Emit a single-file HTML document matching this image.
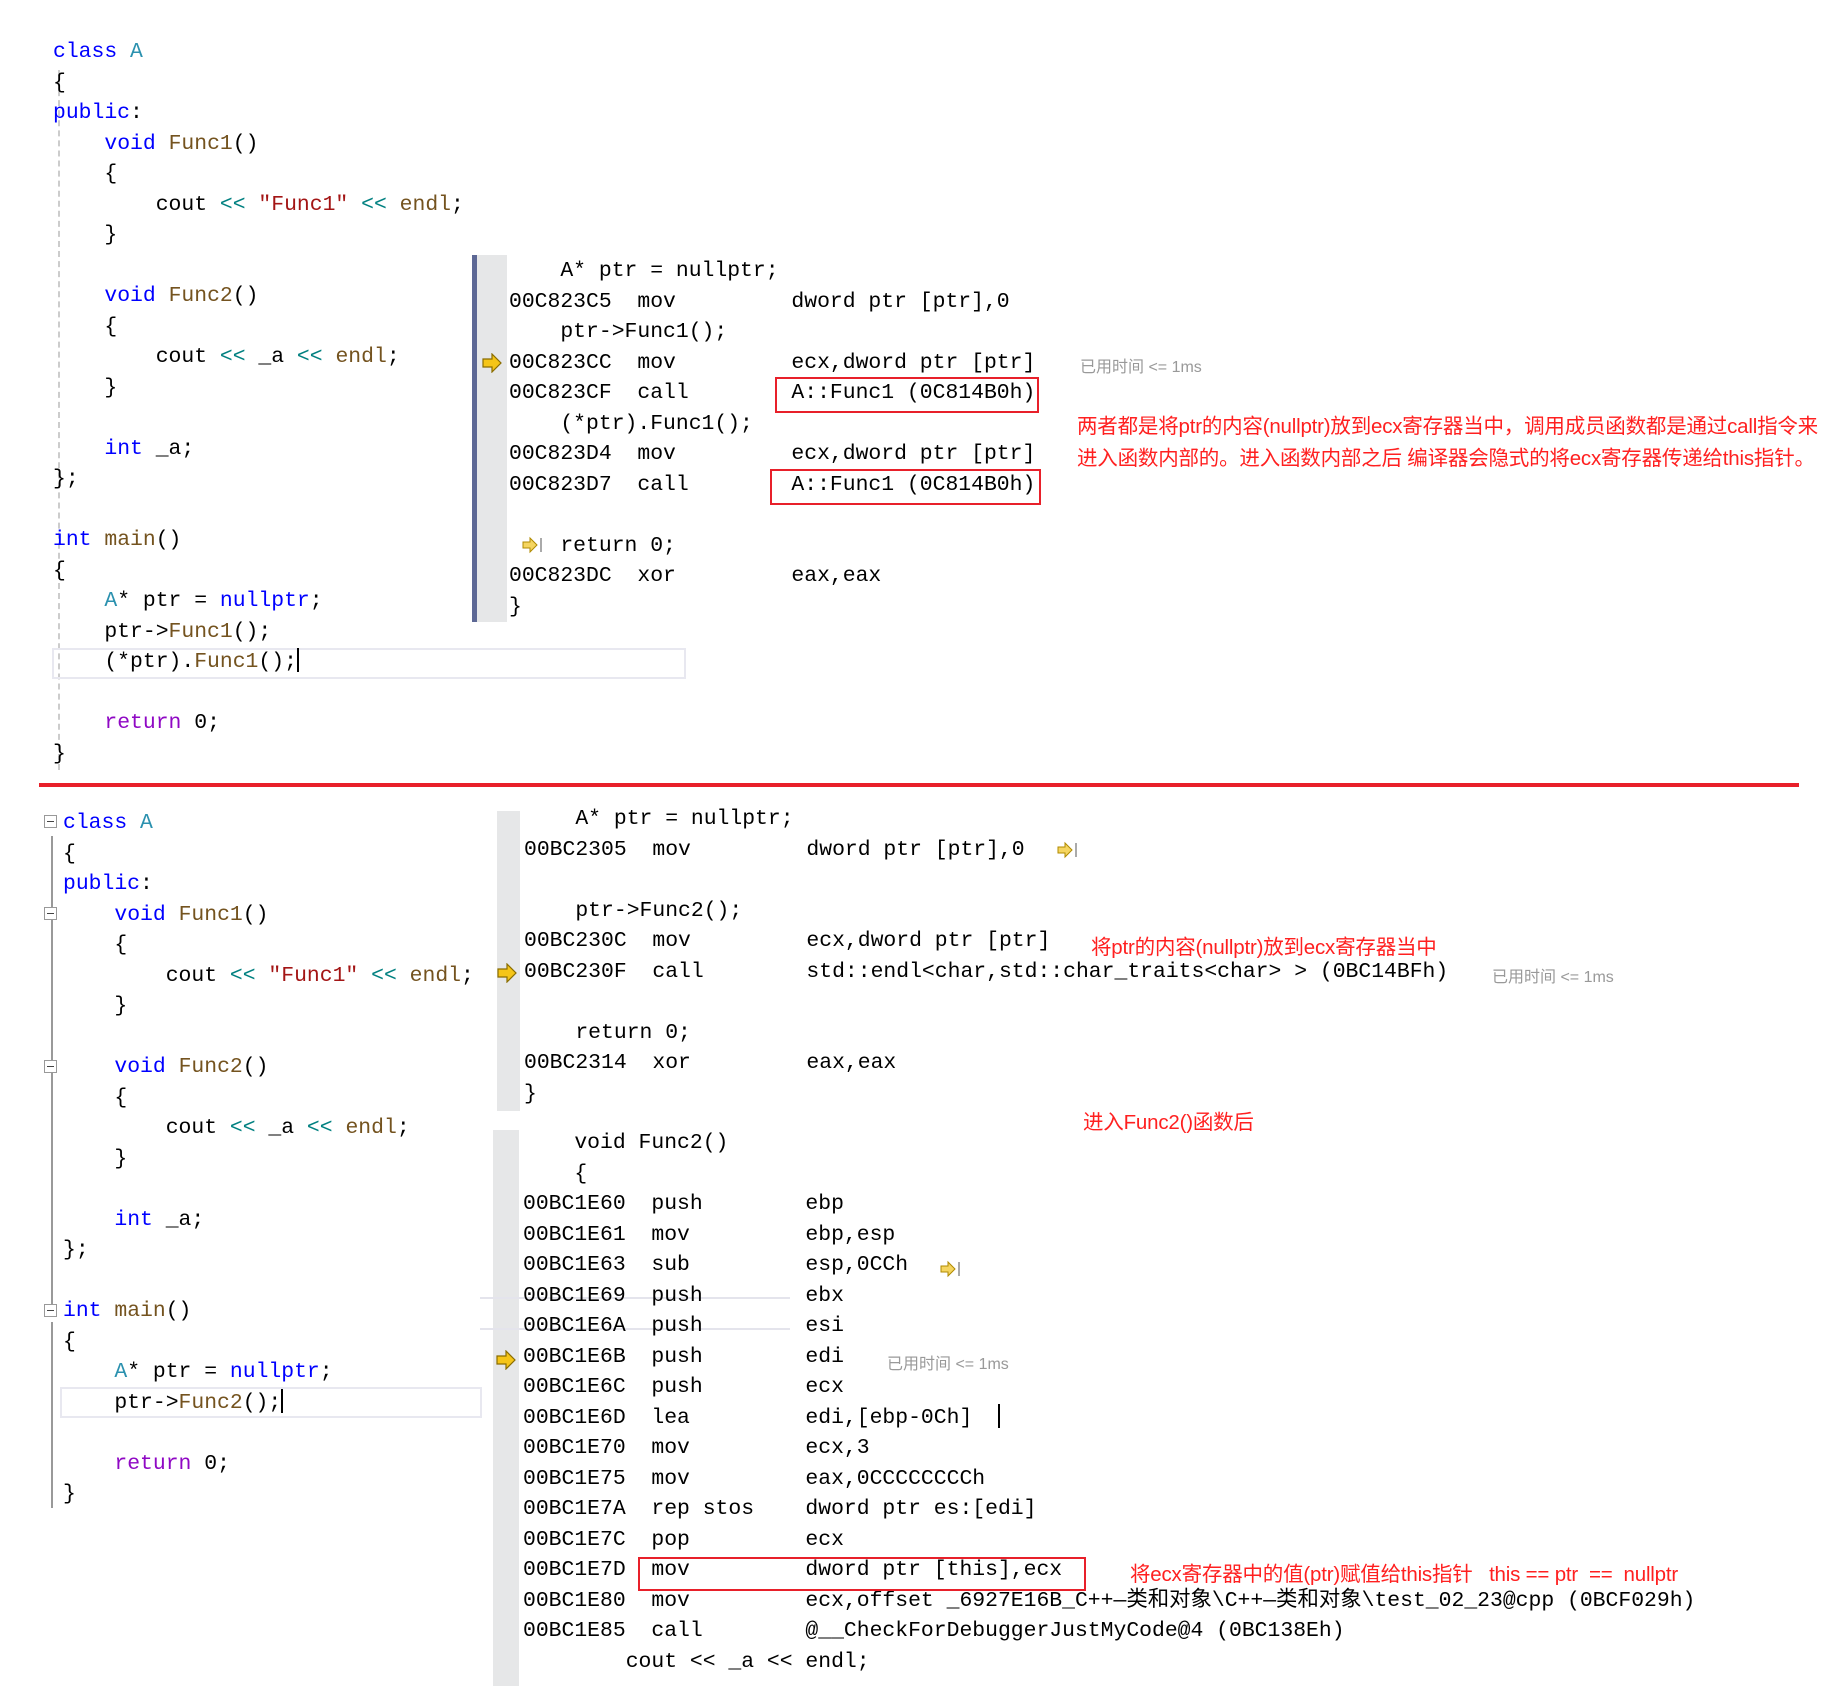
<!DOCTYPE html>
<html><head><meta charset="utf-8"><style>
body{margin:0;width:1840px;height:1686px;background:#fff;position:relative;overflow:hidden;font-family:"Liberation Mono","Noto Sans CJK SC",monospace;}
pre{margin:0;position:absolute;font-family:"Liberation Mono","Noto Sans CJK SC",monospace;font-size:21.4px;line-height:30.5px;color:#000;white-space:pre;}
.k{color:#0000ff}.t{color:#2b91af}.f{color:#74531f}.s{color:#a31515}.o{color:#008080}.r{color:#8f08c4}
.abs{position:absolute}
.bar{position:absolute;background:#e6e7e8}
.box{position:absolute;border:2.5px solid #e8202a;box-sizing:border-box}
.red{position:absolute;color:#ff2020;font-family:"Liberation Sans","Noto Sans CJK SC",sans-serif;font-size:20.5px;white-space:nowrap;letter-spacing:-0.2px}
.gray{position:absolute;color:#999;font-family:"Liberation Sans","Noto Sans CJK SC",sans-serif;font-size:16px;white-space:nowrap}
.arrow{position:absolute;width:22px;height:20px}
.cb{position:absolute;width:11px;height:11px;border:1px solid #999;background:#fff}
.cb:after{content:"";position:absolute;left:2px;right:2px;top:5px;height:1px;background:#444}
.hl{position:absolute;border:2px solid #e8e8f0;box-sizing:border-box}
.cur{display:inline-block;width:2px;height:24px;background:#000;vertical-align:-5px}
</style></head><body>
<!-- top left code -->
<div class="abs" style="left:58px;top:70px;width:0;height:700px;border-left:2px dashed #ccc"></div>
<div class="hl" style="left:52px;top:648px;width:634px;height:31px"></div>
<pre style="left:53px;top:37px"><span class="k">class</span> <span class="t">A</span>
{
<span class="k">public</span>:
    <span class="k">void</span> <span class="f">Func1</span>()
    {
        cout <span class="o">&lt;&lt;</span> <span class="s">"Func1"</span> <span class="o">&lt;&lt;</span> <span class="f">endl</span>;
    }

    <span class="k">void</span> <span class="f">Func2</span>()
    {
        cout <span class="o">&lt;&lt;</span> _a <span class="o">&lt;&lt;</span> <span class="f">endl</span>;
    }

    <span class="k">int</span> _a;
};

<span class="k">int</span> <span class="f">main</span>()
{
    <span class="t">A</span>* ptr = <span class="k">nullptr</span>;
    ptr-&gt;<span class="f">Func1</span>();
    (*ptr).<span class="f">Func1</span>();<span class="cur"></span>

    <span class="r">return</span> 0;
}</pre>
<!-- top disasm -->
<div class="bar" style="left:472px;top:255px;width:35px;height:367px"></div>
<div class="abs" style="left:472px;top:255px;width:5px;height:367px;background:#5d6895"></div>
<pre style="left:509px;top:256px">    A* ptr = nullptr;
00C823C5  mov         dword ptr [ptr],0
    ptr-&gt;Func1();
00C823CC  mov         ecx,dword ptr [ptr]
00C823CF  call        A::Func1 (0C814B0h)
    (*ptr).Func1();
00C823D4  mov         ecx,dword ptr [ptr]
00C823D7  call        A::Func1 (0C814B0h)

    return 0;
00C823DC  xor         eax,eax
}</pre>
<svg class="arrow" style="left:481px;top:353px" viewBox="0 0 22 20"><path d="M2 6h9V1l9 9-9 9v-5H2z" fill="#f5c518" stroke="#8a6d00" stroke-width="1.2"/></svg>
<svg class="abs" style="left:522px;top:536px" width="22" height="18" viewBox="0 0 22 18"><path d="M1 6h7V2l7 7-7 7v-4H1z" fill="#f5d560" stroke="#b08a00"/><rect x="18" y="2" width="2" height="14" fill="#aaa"/></svg>
<div class="box" style="left:775px;top:377px;width:264px;height:36px"></div>
<div class="box" style="left:770px;top:469px;width:271px;height:36px"></div>
<div class="gray" style="left:1080px;top:353px">已用时间 &lt;= 1ms</div>
<div class="red" style="left:1077px;top:409px">两者都是将ptr的内容(nullptr)放到ecx寄存器当中，调用成员函数都是通过call指令来</div>
<div class="red" style="left:1077px;top:441px">进入函数内部的。进入函数内部之后 编译器会隐式的将ecx寄存器传递给this指针。</div>
<!-- red line -->
<div class="abs" style="left:39px;top:783px;width:1760px;height:4px;background:#e8202a"></div>
<!-- bottom left -->
<div class="abs" style="left:51px;top:836px;width:2px;height:470px;background:#999"></div>
<div class="abs" style="left:51px;top:1322px;width:2px;height:186px;background:#999"></div>
<div class="cb" style="left:44px;top:815px"></div>
<div class="cb" style="left:44px;top:907px"></div>
<div class="cb" style="left:44px;top:1060px"></div>
<div class="cb" style="left:44px;top:1304px"></div>
<div class="hl" style="left:60px;top:1387px;width:422px;height:31px"></div>
<pre style="left:63px;top:808px"><span class="k">class</span> <span class="t">A</span>
{
<span class="k">public</span>:
    <span class="k">void</span> <span class="f">Func1</span>()
    {
        cout <span class="o">&lt;&lt;</span> <span class="s">"Func1"</span> <span class="o">&lt;&lt;</span> <span class="f">endl</span>;
    }

    <span class="k">void</span> <span class="f">Func2</span>()
    {
        cout <span class="o">&lt;&lt;</span> _a <span class="o">&lt;&lt;</span> <span class="f">endl</span>;
    }

    <span class="k">int</span> _a;
};

<span class="k">int</span> <span class="f">main</span>()
{
    <span class="t">A</span>* ptr = <span class="k">nullptr</span>;
    ptr-&gt;<span class="f">Func2</span>();<span class="cur"></span>

    <span class="r">return</span> 0;
}</pre>
<!-- bottom disasm 1 -->
<div class="bar" style="left:497px;top:811px;width:23px;height:300px"></div>
<pre style="left:524px;top:804px">    A* ptr = nullptr;
00BC2305  mov         dword ptr [ptr],0

    ptr-&gt;Func2();
00BC230C  mov         ecx,dword ptr [ptr]
00BC230F  call        std::endl&lt;char,std::char_traits&lt;char&gt; &gt; (0BC14BFh)

    return 0;
00BC2314  xor         eax,eax
}</pre>
<svg class="arrow" style="left:496px;top:963px" viewBox="0 0 22 20"><path d="M2 6h9V1l9 9-9 9v-5H2z" fill="#f5c518" stroke="#8a6d00" stroke-width="1.2"/></svg>
<svg class="abs" style="left:1057px;top:841px" width="22" height="18" viewBox="0 0 22 18"><path d="M1 6h7V2l7 7-7 7v-4H1z" fill="#f5d560" stroke="#b08a00"/><rect x="18" y="2" width="2" height="14" fill="#aaa"/></svg>
<div class="red" style="left:1091px;top:930px">将ptr的内容(nullptr)放到ecx寄存器当中</div>
<div class="gray" style="left:1492px;top:963px">已用时间 &lt;= 1ms</div>
<div class="red" style="left:1083px;top:1105px">进入Func2()函数后</div>
<!-- bottom disasm 2 -->
<div class="bar" style="left:493px;top:1130px;width:26px;height:556px"></div>
<div class="abs" style="left:480px;top:1297px;width:310px;height:2px;background:#e4e4ec"></div>
<div class="abs" style="left:480px;top:1328px;width:310px;height:2px;background:#e4e4ec"></div>
<pre style="left:523px;top:1128px">    void Func2()
    {
00BC1E60  push        ebp
00BC1E61  mov         ebp,esp
00BC1E63  sub         esp,0CCh
00BC1E69  push        ebx
00BC1E6A  push        esi
00BC1E6B  push        edi
00BC1E6C  push        ecx
00BC1E6D  lea         edi,[ebp-0Ch]  <span class="cur"></span>
00BC1E70  mov         ecx,3
00BC1E75  mov         eax,0CCCCCCCCh
00BC1E7A  rep stos    dword ptr es:[edi]
00BC1E7C  pop         ecx
00BC1E7D  mov         dword ptr [this],ecx
00BC1E80  mov         ecx,offset _6927E16B_C++—类和对象\C++—类和对象\test_02_23@cpp (0BCF029h)
00BC1E85  call        @__CheckForDebuggerJustMyCode@4 (0BC138Eh)
        cout &lt;&lt; _a &lt;&lt; endl;</pre>
<svg class="arrow" style="left:495px;top:1350px" viewBox="0 0 22 20"><path d="M2 6h9V1l9 9-9 9v-5H2z" fill="#f5c518" stroke="#8a6d00" stroke-width="1.2"/></svg>
<svg class="abs" style="left:940px;top:1260px" width="22" height="18" viewBox="0 0 22 18"><path d="M1 6h7V2l7 7-7 7v-4H1z" fill="#f5d560" stroke="#b08a00"/><rect x="18" y="2" width="2" height="14" fill="#aaa"/></svg>
<div class="gray" style="left:887px;top:1350px">已用时间 &lt;= 1ms</div>
<div class="box" style="left:638px;top:1557px;width:448px;height:34px"></div>
<div class="red" style="left:1130px;top:1557px">将ecx寄存器中的值(ptr)赋值给this指针&nbsp;&nbsp;&nbsp;this == ptr &nbsp;== &nbsp;nullptr</div>
</body></html>
